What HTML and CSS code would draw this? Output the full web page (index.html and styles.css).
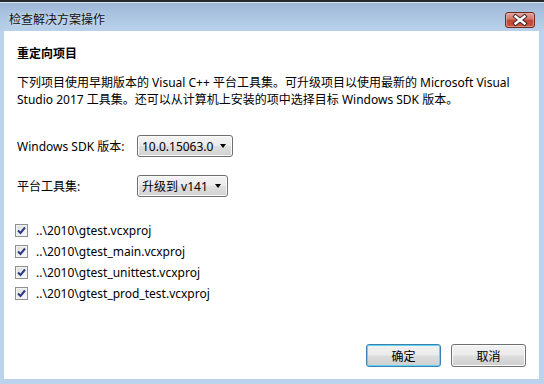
FILE: index.html
```html
<!DOCTYPE html>
<html lang="zh-CN">
<head>
<meta charset="utf-8">
<title>检查解决方案操作</title>
<link rel="stylesheet" href="styles.css">
</head>
<body>
<div class="window">
  <div class="topedge"></div>
  <div class="titlebar">
    <span class="title">检查解决方案操作</span>
    <div class="close">
      <svg width="30" height="16" viewBox="0 0 30 16">
        <defs>
          <linearGradient id="cg" x1="0" y1="0" x2="0" y2="1">
            <stop offset="0" stop-color="#e3a59c"/>
            <stop offset="0.45" stop-color="#d0766a"/>
            <stop offset="0.5" stop-color="#bf4535"/>
            <stop offset="1" stop-color="#c8563f"/>
          </linearGradient>
        </defs>
        <rect x="0.5" y="0.5" width="29" height="15" rx="2.5" fill="url(#cg)" stroke="#6d2a22"/>
        <rect x="1.5" y="1.5" width="27" height="13" rx="1.5" fill="none" stroke="#eab8b0" stroke-opacity="0.6"/>
        <path d="M10.5 4.5 L19.5 11.5 M19.5 4.5 L10.5 11.5" stroke="#3b2220" stroke-width="4.2" stroke-linecap="square"/>
        <path d="M10.5 4.5 L19.5 11.5 M19.5 4.5 L10.5 11.5" stroke="#ffffff" stroke-width="2.4" stroke-linecap="square"/>
      </svg>
    </div>
  </div>
  <div class="client">
    <h1 class="heading">重定向项目</h1>
    <p class="desc">下列项目使用早期版本的 Visual C++ 平台工具集。可升级项目以使用最新的 Microsoft Visual<br>Studio 2017 工具集。还可以从计算机上安装的项中选择目标 Windows SDK 版本。</p>
    <div class="field sdk">
      <span class="label">Windows SDK 版本:</span>
      <div class="combo combo-sdk"><span class="combo-text">10.0.15063.0</span><span class="arrow"></span></div>
    </div>
    <div class="field toolset">
      <span class="label">平台工具集:</span>
      <div class="combo combo-tool"><span class="combo-text">升级到 v141</span><span class="arrow"></span></div>
    </div>
    <ul class="projects">
      <li class="project"><span class="check"><svg width="11" height="11" viewBox="0 0 11 11"><path d="M2 5.5 L4.5 8 L9 2.5" fill="none" stroke="#2b3a87" stroke-width="2"/></svg></span><span class="name">..\2010\gtest.vcxproj</span></li>
      <li class="project"><span class="check"><svg width="11" height="11" viewBox="0 0 11 11"><path d="M2 5.5 L4.5 8 L9 2.5" fill="none" stroke="#2b3a87" stroke-width="2"/></svg></span><span class="name">..\2010\gtest_main.vcxproj</span></li>
      <li class="project"><span class="check"><svg width="11" height="11" viewBox="0 0 11 11"><path d="M2 5.5 L4.5 8 L9 2.5" fill="none" stroke="#2b3a87" stroke-width="2"/></svg></span><span class="name">..\2010\gtest_unittest.vcxproj</span></li>
      <li class="project"><span class="check"><svg width="11" height="11" viewBox="0 0 11 11"><path d="M2 5.5 L4.5 8 L9 2.5" fill="none" stroke="#2b3a87" stroke-width="2"/></svg></span><span class="name">..\2010\gtest_prod_test.vcxproj</span></li>
    </ul>
    <div class="buttons">
      <div class="btn btn-default">确定</div>
      <div class="btn">取消</div>
    </div>
  </div>
</div>
</body>
</html>
```
FILE: styles.css
```css
html, body {
  margin: 0;
  padding: 0;
}
body {
  width: 544px;
  height: 384px;
  overflow: hidden;
  font-family: "Noto Sans", "Noto Sans CJK SC", sans-serif;
  font-size: 12px;
  color: #000;
}
.window {
  width: 544px;
  height: 384px;
  display: flex;
  flex-direction: column;
  background: #bbd3ec;
}
.topedge {
  height: 2px;
  background: #262a2e;
  flex: none;
}
.titlebar {
  height: 29px;
  flex: none;
  display: flex;
  align-items: flex-start;
  justify-content: space-between;
  background: linear-gradient(#9db8d7 0%, #a9c3e0 40%, #b9d1ea 100%);
  border-top: 1px solid #d8e4f0;
  box-sizing: border-box;
}
.title {
  margin: 7px 0 0 9px;
  line-height: 17px;
  font-family: "Noto Sans CJK SC", sans-serif;
  color: #111;
  text-shadow: 0 0 4px rgba(255,255,255,0.7);
}
.close {
  margin: 9px 9px 0 0;
  width: 30px;
  height: 16px;
}
.close svg { display: block; }
.client {
  flex: 1;
  margin: 0 5px 5px 4px;
  background: #fff;
  display: flex;
  flex-direction: column;
  padding: 13px 13px 12px 13px;
  box-sizing: border-box;
}
.heading {
  margin: 0;
  font-size: 12px;
  font-weight: bold;
  line-height: 17px;
  font-family: "Noto Sans CJK SC", sans-serif;
}
.desc {
  margin: 13px 0 0 0;
  line-height: 17px;
  white-space: nowrap;
}
.field {
  display: flex;
  align-items: center;
  height: 22px;
}
.sdk { margin-top: 27px; }
.toolset { margin-top: 18px; }
.label {
  width: 120px;
  flex: none;
}
.combo {
  height: 22px;
  box-sizing: border-box;
  border: 1px solid #707070;
  border-radius: 3px;
  background: linear-gradient(#f3f3f3 0%, #ebebeb 48%, #dedede 52%, #d2d2d2 100%);
  box-shadow: inset 0 0 0 1px #fbfbfb;
  display: flex;
  align-items: center;
  padding-left: 4px;
  position: relative;
}
.combo-sdk { width: 96px; }
.combo-tool { width: 91px; }
.combo-text { line-height: 17px; }
.arrow {
  position: absolute;
  right: 6px;
  top: 8px;
  width: 0;
  height: 0;
  border-left: 3.5px solid transparent;
  border-right: 3.5px solid transparent;
  border-top: 4px solid #000;
}
.projects {
  list-style: none;
  margin: 23px 0 0 -2px;
  padding: 0;
}
.project {
  display: flex;
  align-items: center;
  height: 21px;
}
.check {
  width: 13px;
  height: 13px;
  box-sizing: border-box;
  border: 1px solid #8e8f8f;
  background: linear-gradient(135deg, #dcdcdc, #fbfbfb);
  box-shadow: inset 0 0 0 1px #f4f4f4;
  display: flex;
  align-items: center;
  justify-content: center;
  flex: none;
}
.check svg { display: block; }
.name {
  margin-left: 8px;
  line-height: 17px;
}
.buttons {
  margin-top: auto;
  display: flex;
  justify-content: flex-end;
  gap: 10px;
}
.btn {
  width: 75px;
  height: 23px;
  box-sizing: border-box;
  border: 1px solid #707070;
  border-radius: 3px;
  background: linear-gradient(#f2f2f2 0%, #ebebeb 48%, #dddddd 52%, #cfcfcf 100%);
  box-shadow: inset 0 0 0 1px #fcfcfc;
  display: flex;
  align-items: center;
  justify-content: center;
  font-family: "Noto Sans CJK SC", sans-serif;
  line-height: 17px;
}
.btn-default {
  border-color: #3c7fb1;
  box-shadow: inset 0 0 0 1px #5fd6f7;
}
```
